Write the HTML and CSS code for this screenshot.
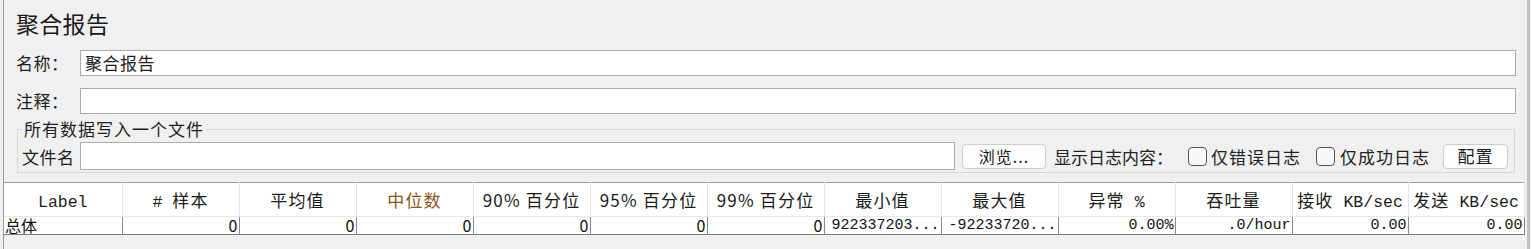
FILE: index.html
```html
<!DOCTYPE html>
<html lang="zh-CN">
<head>
<meta charset="utf-8">
<title>聚合报告</title>
<link rel="stylesheet" href="styles.css">
</head>
<body>
<div class="frame">
  <div class="panel">
    <h1 class="title">聚合报告</h1>
    <div class="field-row">
      <label class="field-label">名称：</label>
      <div class="text-input">聚合报告</div>
    </div>
    <div class="field-row field-row--second">
      <label class="field-label">注释：</label>
      <div class="text-input"></div>
    </div>
    <fieldset class="group">
      <legend class="group-title">所有数据写入一个文件</legend>
      <div class="file-row">
        <label class="file-label">文件名</label>
        <div class="text-input text-input--file"></div>
        <button class="btn btn--browse">浏览...</button>
        <span class="log-label">显示日志内容：</span>
        <label class="check"><input type="checkbox" class="check-box"><span>仅错误日志</span></label>
        <label class="check check--second"><input type="checkbox" class="check-box"><span>仅成功日志</span></label>
        <button class="btn btn--config">配置</button>
      </div>
    </fieldset>
  </div>
  <table class="report">
    <colgroup>
      <col class="col-first">
      <col class="col"><col class="col"><col class="col"><col class="col">
      <col class="col"><col class="col"><col class="col"><col class="col">
      <col class="col"><col class="col">
      <col class="col-eleven">
      <col class="col-last">
    </colgroup>
    <thead>
      <tr>
        <th><span class="m">Label</span></th>
        <th><span class="m">#&nbsp;</span>样本</th>
        <th>平均值</th>
        <th class="sorted">中位数</th>
        <th>90% 百分位</th>
        <th>95% 百分位</th>
        <th>99% 百分位</th>
        <th>最小值</th>
        <th>最大值</th>
        <th>异常<span class="m">&nbsp;%</span></th>
        <th>吞吐量</th>
        <th>接收<span class="m">&nbsp;KB/sec</span></th>
        <th>发送<span class="m">&nbsp;KB/sec</span></th>
      </tr>
    </thead>
    <tbody>
      <tr>
        <td class="cell-label">总体</td>
        <td class="num">0</td>
        <td class="num">0</td>
        <td class="num">0</td>
        <td class="num">0</td>
        <td class="num">0</td>
        <td class="num">0</td>
        <td class="num m">922337203...</td>
        <td class="num m">-92233720...</td>
        <td class="num m">0.00%</td>
        <td class="num m">.0/hour</td>
        <td class="num m">0.00</td>
        <td class="num m">0.00</td>
      </tr>
    </tbody>
  </table>
</div>
</body>
</html>
```
FILE: styles.css
```css
* { box-sizing: border-box; }

html, body {
  margin: 0;
  padding: 0;
  background: #f0f0f0;
}

body {
  width: 1531px;
  height: 249px;
  overflow: hidden;
  font-family: "Noto Sans CJK SC", "Noto Sans", sans-serif;
  color: #1e1e1e;
}

.frame {
  margin-left: 3px;
  width: 1527px;
  height: 249px;
  border-left: 1px solid #9c9c9c;
  border-right: 3px solid #c2c2c2;
  display: flex;
  flex-direction: column;
}

.panel {
  padding: 8px 11px 0 12px;
  display: flex;
  flex-direction: column;
}

.title {
  margin: 0;
  font-size: 23px;
  font-weight: normal;
  line-height: 30px;
  letter-spacing: 0.3px;
  color: #1a1a1a;
}

.field-row {
  display: flex;
  align-items: center;
  margin-top: 12px;
  height: 26px;
}

.field-label {
  width: 64px;
  flex: none;
  font-size: 17px;
  letter-spacing: 0.5px;
  line-height: 26px;
}

.text-input {
  flex: 1;
  height: 26px;
  background: #fff;
  border: 1px solid #ababab;
  font-size: 17px;
  line-height: 24px;
  padding-left: 4px;
  letter-spacing: 0.5px;
}

.group {
  margin: 6px 1px 0 1px;
  padding: 0 6px 2px 4px;
  border: 1px solid #d6d6d6;
  min-width: 0;
}

.group-title {
  padding: 0 2px;
  font-size: 17px;
  line-height: 18px;
  letter-spacing: 1px;
}

.file-row {
  display: flex;
  align-items: center;
  margin-top: 4px;
  height: 28px;
}

.file-label {
  width: 58px;
  flex: none;
  font-size: 17px;
  letter-spacing: 0.5px;
}

.text-input--file {
  height: 28px;
}

.btn {
  flex: none;
  height: 25px;
  background: #fdfdfd;
  border: 1px solid #cccccc;
  border-radius: 4px;
  font-family: "Noto Sans CJK SC", "Noto Sans", sans-serif;
  font-size: 16px;
  color: #1a1a1a;
  padding: 0;
  line-height: 22px;
}

.btn--browse {
  width: 84px;
  margin-left: 7px;
  letter-spacing: 1px;
}

.btn--config {
  width: 65px;
  margin-left: 13px;
  font-size: 17px;
  letter-spacing: 1px;
}

.log-label {
  flex: none;
  margin-left: 8px;
  width: 134px;
  font-size: 17px;
  letter-spacing: 0;
  color: #222;
}

.check {
  flex: none;
  display: flex;
  align-items: center;
  font-size: 17px;
  letter-spacing: 1px;
  color: #222;
}

.check--second { margin-left: 15px; }

.check-box {
  appearance: none;
  -webkit-appearance: none;
  margin: 0 4px 0 0;
  width: 19px;
  height: 19px;
  border: 1px solid #555;
  border-radius: 4px;
  background: #f8f8f8;
}

.check--second .check-box { margin-right: 5px; }

.report {
  margin: 9px 0 0 0;
  width: 1520px;
  border-collapse: collapse;
  table-layout: fixed;
  background: #fff;
  border-top: 1px solid #9e9e9e;
}

.col-first { width: 118px; }
.col { width: 117px; }
.col-eleven { width: 116px; }
.col-last { width: 116px; }

.report th {
  height: 34px;
  padding: 0;
  font-weight: normal;
  font-size: 17px;
  letter-spacing: 1.2px;
  text-align: center;
  border-right: 1px solid #e4e4e4;
  border-bottom: 1px solid #e8e8e8;
  color: #1a1a1a;
  white-space: nowrap;
  overflow: hidden;
}

.report th.sorted { color: #8a5418; }

.report td {
  height: 18px;
  padding: 0 1px 0 2px;
  font-size: 16px;
  line-height: 17px;
  border-right: 1px solid #8a8a8a;
  border-bottom: 1px solid #7a7a7a;
  white-space: nowrap;
  color: #111;
}

.report td.cell-label { padding-left: 1px; }

.report td.num { text-align: right; }

.m {
  font-family: "Liberation Mono", "Noto Sans CJK SC", monospace;
  letter-spacing: 0;
}

.report th .m { font-size: 16.5px; }

.report td.m { font-size: 15px; letter-spacing: 0; }
```
